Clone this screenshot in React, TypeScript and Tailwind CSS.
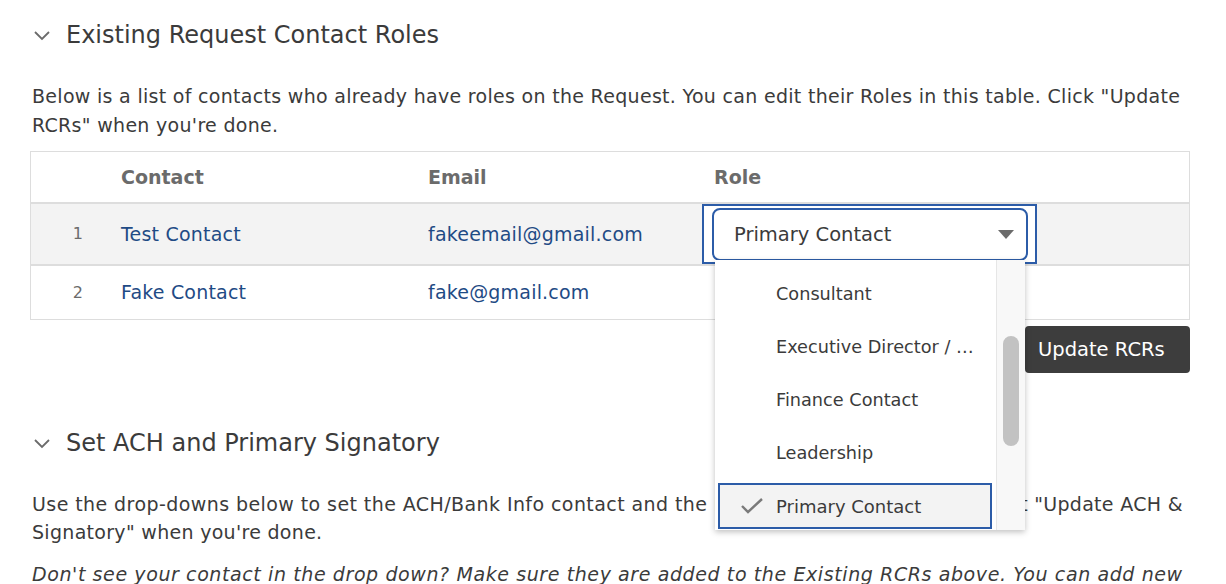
import React from "react";

const Chevron = () => (
  <svg width="18" height="12" viewBox="0 0 18 12" className="shrink-0">
    <polyline points="2,3 9,10 16,3" fill="none" stroke="#6b6b6b" strokeWidth="1.8" />
  </svg>
);

const Check = () => (
  <svg width="24" height="18" viewBox="0 0 24 18">
    <polyline points="2,9 8,15 22,2" fill="none" stroke="#7a7a7a" strokeWidth="2.4" />
  </svg>
);

export default function App() {
  const items = ["Consultant", "Executive Director / …", "Finance Contact", "Leadership"];
  return (
    <div className="w-[1226px] h-[584px] overflow-hidden bg-white pl-[30px] pr-[36px] text-[#3b3b3b] font-['DejaVu_Sans',Verdana,sans-serif]">
      {/* Section 1 heading */}
      <div className="flex items-center h-[70px] gap-[15px] pl-[3px]">
        <Chevron />
        <span className="text-[24px] text-[#3b3b3b]">Existing Request Contact Roles</span>
      </div>
      <p className="ml-[2px] mt-[12px] text-[19px] leading-[29px] tracking-[0.3px] whitespace-nowrap">
        Below is a list of contacts who already have roles on the Request. You can edit their Roles in this table. Click "Update
        <br />
        RCRs" when you're done.
      </p>

      {/* Table */}
      <div className="mt-[11px] border border-[#dddddd]">
        <div className="grid grid-cols-[90px_307px_286px_1fr] h-[50px] items-center text-[19px] font-bold text-[#6b6b6b]">
          <div />
          <div>Contact</div>
          <div>Email</div>
          <div>Role</div>
        </div>
        <div className="grid grid-cols-[90px_307px_286px_1fr] h-[62px] items-center border-t-2 border-[#dddddd] bg-[#f3f3f3] text-[19px] tracking-[0.2px]">
          <div className="text-center text-[16px] text-[#6b6b6b] pl-[4px]">1</div>
          <div className="text-[#1f4b85]">Test Contact</div>
          <div className="text-[#1f4b85]">fakeemail@gmail.com</div>
          <div className="relative h-full">
            <div className="absolute left-[-12px] top-0 w-[335px] h-[60px] border-2 border-[#2c5ca8] bg-white pl-[8px] pr-[7px] pt-[2px]">
              <div className="flex items-center justify-between h-[53px] rounded-[8px] border-2 border-[#2c5ca8] bg-white pl-[20px] pr-[12px] text-[19.5px] tracking-normal text-[#3b3b3b]">
                <span>Primary Contact</span>
                <svg width="16" height="10" viewBox="0 0 16 10">
                  <polygon points="0,0 16,0 8,9" fill="#6b6b6b" />
                </svg>
              </div>
            </div>
            {/* dropdown */}
            <div className="absolute left-[1px] top-[56px] z-10 w-[310px] h-[270px] bg-white shadow-[0_2px_6px_rgba(0,0,0,0.25)] flex overflow-hidden tracking-normal">
              <div className="flex-1 pt-[8px]">
                {items.map((t) => (
                  <div key={t} className="h-[53px] flex items-center pl-[61px] text-[17.7px] text-[#3b3b3b] whitespace-nowrap">
                    {t}
                  </div>
                ))}
                <div className="h-[53px] pt-[3px] pl-[3px]">
                  <div className="h-[46px] w-[274px] border-2 border-[#2c5ca8] bg-[#f3f3f3] flex items-center pl-[20px] gap-[12px] text-[18px] text-[#3b3b3b]">
                    <Check />
                    <span>Primary Contact</span>
                  </div>
                </div>
              </div>
              <div className="w-[29px] h-full bg-[#f8f8f8] border-l border-[#e6e6e6] pt-[76px] flex justify-center">
                <div className="w-[16px] h-[110px] rounded-full bg-[#c2c2c2]" />
              </div>
            </div>
          </div>
        </div>
        <div className="grid grid-cols-[90px_307px_286px_1fr] h-[55px] items-center border-t-2 border-[#dddddd] text-[19px] tracking-[0.2px]">
          <div className="text-center text-[16px] text-[#6b6b6b] pl-[4px]">2</div>
          <div className="text-[#1f4b85]">Fake Contact</div>
          <div className="text-[#1f4b85]">fake@gmail.com</div>
          <div />
        </div>
      </div>

      <div className="flex justify-end mt-[6px]">
        <button className="h-[47px] w-[165px] rounded-[4px] bg-[#3d3d3d] text-white text-[19.5px] text-left pl-[13px]">
          Update RCRs
        </button>
      </div>

      {/* Section 2 */}
      <div className="flex items-center h-[44px] mt-[48px] gap-[15px] pl-[3px]">
        <Chevron />
        <span className="text-[24px] text-[#3b3b3b]">Set ACH and Primary Signatory</span>
      </div>
      <p className="ml-[2px] mt-[25px] text-[19px] leading-[28px] tracking-[0.3px] whitespace-nowrap">
        <span className="tracking-[0.42px]">Use the drop-downs below to set the ACH/Bank Info contact and the </span>
        <span className="tracking-[-0.15px]">Primary Signatory contact. Selec</span>t "Update ACH &amp;
        <br />
        Signatory" when you're done.
      </p>
      <p className="ml-[2px] mt-[14px] text-[19px] leading-[28px] tracking-[0.6px] italic whitespace-nowrap">
        Don't see your contact in the drop down? Make sure they are added to the Existing RCRs above. You can add new
      </p>
    </div>
  );
}
